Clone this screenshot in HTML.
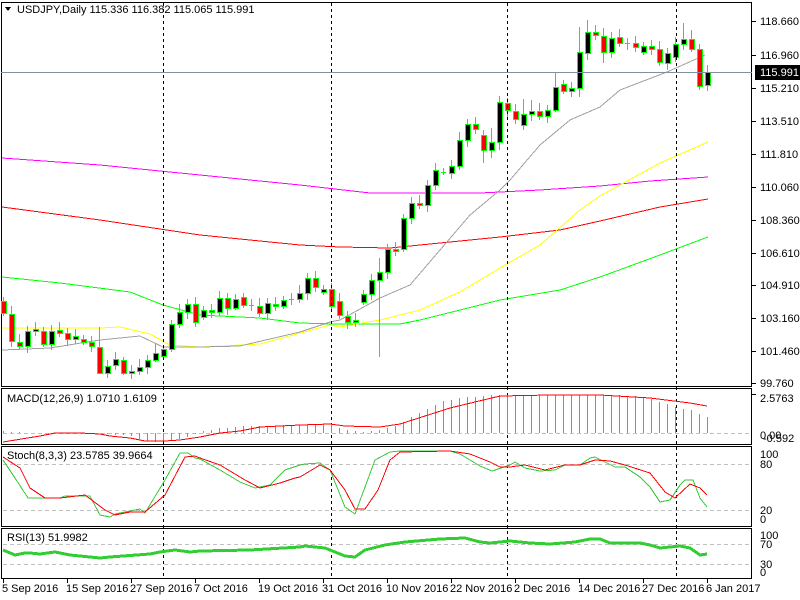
<!DOCTYPE html>
<html><head><meta charset="utf-8"><style>
html,body{margin:0;padding:0;background:#fff;width:800px;height:600px;overflow:hidden}
svg{display:block}
text{font-family:"Liberation Sans",sans-serif;font-size:11px;fill:#000}
</style></head><body>
<svg id="s" width="800" height="600" xmlns="http://www.w3.org/2000/svg" shape-rendering="crispEdges"></svg>
<script>
var S=document.getElementById('s'),out=[];
function poly(pts,col,w,dash){out.push('<polyline fill="none" stroke="'+col+'" stroke-width="'+(w||1)+'"'+(dash?' stroke-dasharray="'+dash+'"':'')+' points="'+pts.map(function(p){return p[0]+','+p[1]}).join(' ')+'"/>');}
function ln(x1,y1,x2,y2,col,w,dash){out.push('<line x1="'+x1+'" y1="'+y1+'" x2="'+x2+'" y2="'+y2+'" stroke="'+col+'" stroke-width="'+(w||1)+'"'+(dash?' stroke-dasharray="'+dash+'"':'')+'/>');}
function rect(x,y,w,h,f,s){out.push('<rect x="'+x+'" y="'+y+'" width="'+w+'" height="'+h+'" fill="'+f+'"'+(s?' stroke="'+s+'"':'')+'/>');}
function txt(x,y,t,fill,anchor){out.push('<text x="'+x+'" y="'+y+'"'+(fill?' style="fill:'+fill+'"':'')+(anchor?' text-anchor="'+anchor+'"':'')+'>'+t+'</text>');}
function interp(pts,x){for(var i=0;i<pts.length-1;i++){if(x>=pts[i][0]&&x<=pts[i+1][0]){var t=(x-pts[i][0])/(pts[i+1][0]-pts[i][0]);return pts[i][1]+t*(pts[i+1][1]-pts[i][1]);}}return x<pts[0][0]?pts[0][1]:pts[pts.length-1][1];}
rect(1.5,2.5,750,384,'none','#000');
rect(1.5,388.5,750,56,'none','#000');
rect(1.5,446.5,750,80,'none','#000');
rect(1.5,528.5,750,50,'none','#000');
poly([[2,158],[100,165],[200,175],[300,185],[370,193],[420,193],[480,193],[540,190],[600,186],[650,181],[708,177]],'#ff00ff');
poly([[2,207],[100,220],[200,235],[300,245],[340,247],[390,248],[440,243],[500,237],[560,230],[600,221],[660,207],[708,199]],'#ff0000');
poly([[2,277],[60,283],[130,292],[163,305],[200,315],[260,318],[300,323],[333,324],[400,324],[420,320],[460,310],[500,300],[560,290],[600,277],[660,255],[708,237]],'#00ff00');
poly([[2,328],[100,328],[120,327],[150,334],[170,345],[200,347],[260,344],[330,325],[340,327],[380,320],[420,310],[460,292],[500,268],[540,245],[580,210],[600,196],[660,163],[708,142]],'#ffff00');
poly([[2,350],[50,348],[100,340],[140,336],[163,347],[200,347],[240,346],[300,332],[330,322],[340,320],[380,298],[410,285],[440,250],[470,215],[500,190],[510,180],[540,145],[570,120],[600,107],[620,90],[667,72],[705,55]],'#a0a0a0');
var c=[[301,313,0],[314,341,0],[342,346,0],[331,346,1],[329,331,1],[331,344,0],[331,344,1],[330,333,0],[333,339,0],[336,339,1],[339,342,0],[342,346,0],[347,373,0],[366,373,1],[359,365,1],[360,373,0],[371,373,1],[367,371,1],[360,367,1],[353,360,1],[349,356,1],[324,349,1],[312,324,1],[304,312,1],[304,322,0],[310,317,1],[310,312,0],[298,312,1],[298,308,0],[299,308,1],[297,305,0],[305,305,1],[306,313,0],[303,313,1],[304,306,0],[300,306,1],[299,299,1],[293,299,1],[278,293,1],[278,287,0],[289,292,1],[289,306,0],[301,315,0],[316,322,0],[320,322,1],[294,302,1],[280,294,1],[272,280,1],[249,272,1],[249,251,0],[218,249,1],[203,218,1],[203,205,0],[185,205,1],[170,185,1],[172,172,1],[166,173,1],[140,166,1],[124,140,1],[124,129,0],[135,150,0],[142,150,1],[102,142,1],[103,110,0],[111,119,0],[114,125,1],[111,114,1],[111,116,0],[110,116,1],[87,110,1],[84,91,0],[88,91,1],[52,88,1],[32,53,1],[32,35,0],[36,52,0],[38,52,1],[37,43,0],[43,43,1],[43,47,0],[46,52,1],[46,49,0],[49,62,0],[53,63,1],[44,57,1],[39,44,1],[39,49,0],[49,86,0],[72,85,1]];
var wk={1:[306,347],12:[327,373],13:[360,378],21:[320,352],29:[294,310],47:[258,357],62:[96,150],69:[72,112],72:[27,97],73:[20,60],75:[28,63],85:[23,50],86:[30,52],87:[44,90],88:[65,91],66:[100,121],65:[99,130],60:[130,163],61:[128,158],15:[357,375],19:[343,362],27:[291,316]};
for(var i=0;i<c.length;i++){var x=Math.round(3.3+8*i),b=c[i];var w=wk[i]||[b[0]-4-(i*7%5),b[1]+3+(i*3%5)];
ln(x+.5,w[0],x+.5,w[1],'#00ff00');
if(b[1]-b[0]<1){ln(x-2,b[0]+.5,x+3,b[0]+.5,'#00ff00');}else{rect(x-2+.5,b[0]+.5,5,b[1]-b[0],b[2]?'#000':'#ff0000','#00ff00');}}
ln(1,72.5,752,72.5,'#8090a0');
[163,331,507,676].forEach(function(x){ln(x+.5,3,x+.5,579,'#000',1,'3,3');});
var lab=[['118.660',21],['116.960',55],['115.210',88],['113.510',121],['111.810',154],['110.060',187],['108.360',220],['106.610',253],['104.910',285],['103.160',318],['101.460',351],['99.760',383]];
lab.forEach(function(l){ln(752,l[1]+.5,756,l[1]+.5,'#000');txt(760,l[1]+4,l[0]);});
rect(755,65,45,15,'#000');txt(760,76,'115.991','#fff');
ln(3,433.5,751,433.5,'#c0c0c0',1,'4,3');
var hist=[[2,431],[10,432],[40,433],[100,433],[130,436],[150,442],[165,441],[185,438],[200,432],[220,428],[250,426],[300,425],[330,424],[345,430],[360,432],[380,430],[400,424],[420,412],[440,402],[460,398],[480,396],[500,395],[540,395],[600,395],[640,396],[660,402],[680,408],[692,410],[700,415],[707,417]];
for(var i=0;i<c.length;i++){var x=Math.round(3.3+8*i),v=Math.round(interp(hist,x));if(Math.abs(v-433)>=1)ln(x+.5,433,x+.5,v,'#3cc83c');}
poly([[3,442],[40,436],[55,433],[80,433],[100,434],[110,436],[130,438],[145,441],[165,441],[180,440],[200,437],[220,433],[240,431],[260,427],[300,425],[330,424],[345,426],[380,427],[400,424],[450,408],[500,396],[550,395],[600,395],[650,398],[690,403],[707,406]],'#ff0000');
txt(7,402,'MACD(12,26,9) 1.0710 1.6109');
txt(760,402,'2.5763');ln(752,394.5,756,394.5,'#000');
txt(760,439,'0.00');txt(763,442,'-0.592');
ln(3,464.5,751,464.5,'#c0c0c0',1,'4,3');ln(3,510.5,751,510.5,'#c0c0c0',1,'4,3');
poly([[3,460],[15,478],[28,498],[40,498],[60,498],[65,496],[90,496],[100,515],[110,517],[115,514],[140,509],[145,513],[165,480],[180,453],[188,453],[195,458],[200,459],[220,470],[240,482],[255,488],[270,485],[285,470],[300,465],[305,464],[320,463],[330,470],[345,507],[355,514],[375,460],[390,452],[400,451],[450,451],[460,454],[480,466],[492,471],[510,465],[515,462],[525,468],[540,471],[555,470],[565,465],[580,465],[590,458],[595,457],[615,467],[625,467],[640,477],[650,487],[660,502],[670,500],[680,485],[685,480],[693,480],[700,498],[707,507]],'#3cc83c');
poly([[3,457],[20,468],[30,488],[45,498],[60,498],[85,495],[105,510],[115,515],[130,512],[145,512],[165,495],[185,457],[195,456],[200,458],[220,465],[245,480],[260,488],[280,483],[295,478],[300,477],[320,465],[330,470],[345,490],[355,509],[365,509],[378,490],[390,460],[400,452],[450,451],[470,454],[490,462],[500,467],[510,467],[525,465],[545,470],[565,465],[580,465],[595,460],[610,461],[625,465],[650,473],[665,492],[675,498],[690,484],[700,488],[707,495]],'#ff0000');
txt(7,459,'Stoch(8,3,3) 23.5785 39.9664');
txt(760,458,'100');txt(760,468,'80');txt(760,514,'20');txt(760,523,'0');
ln(3,544.5,751,544.5,'#c0c0c0',1,'4,3');ln(3,564.5,751,564.5,'#c0c0c0',1,'4,3');
poly([[3,550],[15,555],[25,553],[30,553],[40,554],[55,552],[70,555],[100,558],[110,557],[150,554],[160,552],[175,550],[190,552],[200,551],[250,550],[300,547],[305,546],[325,548],[345,556],[355,557],[365,550],[385,545],[405,542],[440,539],[465,538],[480,542],[490,543],[510,541],[530,543],[550,544],[575,542],[590,539],[600,539],[610,543],[640,543],[650,545],[660,548],[680,546],[690,548],[700,555],[707,554]],'#32cd32',3);
txt(7,541,'RSI(13) 51.9982');
txt(760,539,'100');txt(760,548,'70');txt(760,568,'30');txt(760,576,'0');
var d=[['5 Sep 2016',3],['15 Sep 2016',67],['27 Sep 2016',131],['7 Oct 2016',195],['19 Oct 2016',259],['31 Oct 2016',323],['10 Nov 2016',387],['22 Nov 2016',451],['2 Dec 2016',515],['14 Dec 2016',579],['27 Dec 2016',643],['6 Jan 2017',707]];
d.forEach(function(e){ln(e[1]+.5,579,e[1]+.5,583,'#000');txt(e[1]-1,592,e[0]);});
out.push('<polygon points="5,7 11,7 8,11" fill="#000"/>');
txt(17,13,'USDJPY,Daily  115.336 116.382 115.065 115.991');
S.innerHTML=out.join('');
</script>
</body></html>
